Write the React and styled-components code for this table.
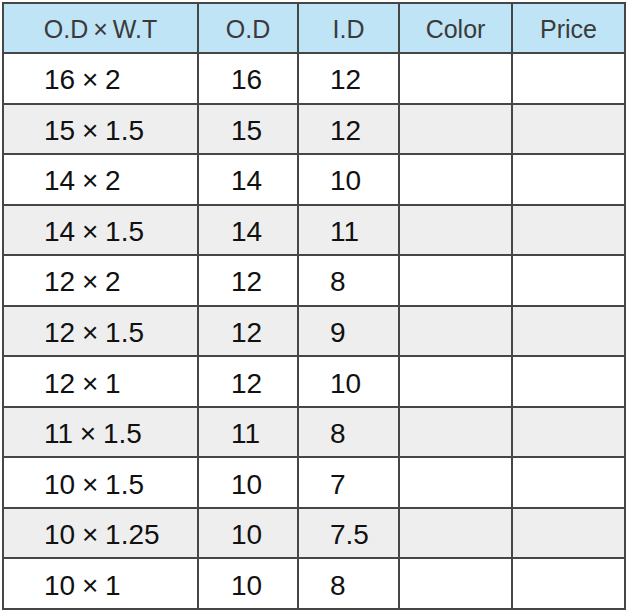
import React from "react";
import styled, { createGlobalStyle } from "styled-components";

const Global = createGlobalStyle`
  html, body { margin: 0; padding: 0; background: #ffffff; }
  body { font-family: "Liberation Sans", Arial, Helvetica, sans-serif; }
`;

const Page = styled.div`
  padding: 2px 0 0 2px;
`;

const Grid = styled.div`
  display: grid;
  box-sizing: border-box;
  width: 624px;
  height: 608px;
  padding: 2px;
  gap: 2px;
  background: #464646;
  grid-template-columns: 193px 98px 99px 111px 111px;
  grid-template-rows: 48px repeat(11, 1fr);
`;

const HeadCell = styled.div`
  background: #bfe4f6;
  color: #3a3a3a;
  font-size: 25px;
  display: flex;
  align-items: center;
  justify-content: center;
  padding-top: 3px;
  box-sizing: border-box;
`;

const Cell = styled.div`
  background: ${(p) => (p.$striped ? "#eeeeee" : "#ffffff")};
  color: #111111;
  font-size: 28px;
  word-spacing: -1px;
  display: flex;
  align-items: center;
  box-sizing: border-box;
  padding-top: 4px;
  padding-left: ${(p) => p.$pad}px;
`;

const headers = ["O.D\u2009×\u2009W.T", "O.D", "I.D", "Color", "Price"];
const rows = [
  ["16 × 2", "16", "12"],
  ["15 × 1.5", "15", "12"],
  ["14 × 2", "14", "10"],
  ["14 × 1.5", "14", "11"],
  ["12 × 2", "12", "8"],
  ["12 × 1.5", "12", "9"],
  ["12 × 1", "12", "10"],
  ["11 × 1.5", "11", "8"],
  ["10 × 1.5", "10", "7"],
  ["10 × 1.25", "10", "7.5"],
  ["10 × 1", "10", "8"],
];
const pads = [40, 32, 31, 0, 0];

export default function App() {
  return (
    <Page>
      <Global />
      <Grid>
        {headers.map((h) => (
          <HeadCell key={h}>{h}</HeadCell>
        ))}
        {rows.map((r, i) =>
          [...r, "", ""].map((v, j) => (
            <Cell key={`${i}-${j}`} $striped={i % 2 === 1} $pad={pads[j]}>
              {v}
            </Cell>
          ))
        )}
      </Grid>
    </Page>
  );
}
